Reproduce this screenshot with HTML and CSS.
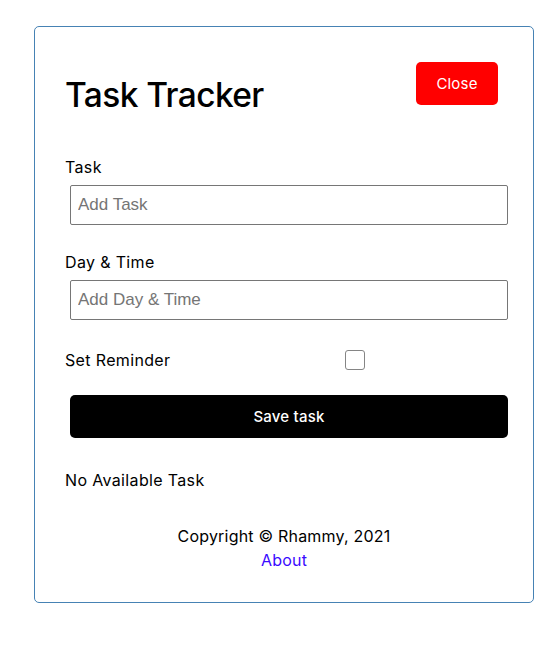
FILE: index.html
```html
<!DOCTYPE html>
<html lang="en">
<head>
<meta charset="utf-8">
<title>Task Tracker</title>
<link rel="stylesheet" href="styles.css">
</head>
<body>
<div class="container">
  <header class="header">
    <h1 class="title">Task Tracker</h1>
    <button class="btn btn-close" type="button">Close</button>
  </header>
  <form class="add-form">
    <div class="form-control">
      <label class="field-label">Task</label>
      <input class="text-input" type="text" placeholder="Add Task">
    </div>
    <div class="form-control">
      <label class="field-label">Day &amp; Time</label>
      <input class="text-input" type="text" placeholder="Add Day &amp; Time">
    </div>
    <div class="form-control form-control-check">
      <label class="check-label">Set Reminder</label>
      <span class="check-wrap"><input class="check-input" type="checkbox"></span>
    </div>
    <button class="btn btn-block" type="button">Save task</button>
  </form>
  <p class="empty">No Available Task</p>
  <footer class="footer">
    <p class="footer-line">Copyright © Rhammy, 2021</p>
    <a class="footer-link" href="#">About</a>
  </footer>
</div>
</body>
</html>
```

FILE: styles.css
```css
* {
  box-sizing: border-box;
  margin: 0;
  padding: 0;
}

body {
  font-family: "Inter", "Liberation Sans", sans-serif;
  font-size: 16px;
  letter-spacing: 0.35px;
  color: #000;
  background: #fff;
}

.container {
  width: 500px;
  margin: 26px 0 0 34px;
  border: 1px solid steelblue;
  border-radius: 5px;
  padding: 30px;
}

.header {
  display: flex;
  justify-content: space-between;
  align-items: flex-start;
  height: 78px;
}

.title {
  font-size: 33.5px;
  font-weight: 500;
  line-height: 40px;
  margin-top: 18px;
  letter-spacing: -0.6px;
}

.btn {
  display: inline-block;
  background: #000;
  color: #fff;
  border: none;
  padding: 10px 20px;
  margin: 5px;
  border-radius: 5px;
  font-family: inherit;
  font-size: 15px;
  font-weight: 500;
  letter-spacing: 0.2px;
  line-height: 23px;
  cursor: pointer;
}

.btn-close {
  background: red;
  width: 82px;
  padding: 10px 0;
  text-align: center;
  font-weight: 400;
}

.btn-block {
  display: block;
  width: 100%;
  margin: 20px 5px 0 5px;
}

.form-control {
  margin: 20px 0;
  padding-bottom: 5px;
}

.field-label {
  display: block;
  line-height: 25px;
}

.text-input {
  display: block;
  width: 100%;
  height: 40px;
  margin: 5px 5px 0 5px;
  padding: 3px 7px;
  font-family: "Liberation Sans", Arial, sans-serif;
  font-size: 17px;
  letter-spacing: 0;
  border: 1px solid #767676;
  border-radius: 2px;
  background: #fff;
}

.text-input::placeholder {
  color: #757575;
}

.form-control-check {
  display: flex;
  align-items: center;
  padding-bottom: 0;
}

.check-label {
  flex: 1;
  line-height: 24px;
}

.check-wrap {
  flex: 2;
  height: 20px;
  margin: 5px;
  display: flex;
  justify-content: center;
}

.check-input {
  appearance: none;
  -webkit-appearance: none;
  width: 20px;
  height: 20px;
  border: 1px solid #858585;
  border-radius: 3px;
  background: #fff;
}

.empty {
  margin-top: 30px;
  line-height: 24px;
}

.footer {
  margin-top: 32px;
  text-align: center;
  line-height: 24px;
  letter-spacing: 0.2px;
}

.footer-line {
  line-height: 24px;
}

.footer-link {
  color: #3a0bff;
  text-decoration: none;
}
```
